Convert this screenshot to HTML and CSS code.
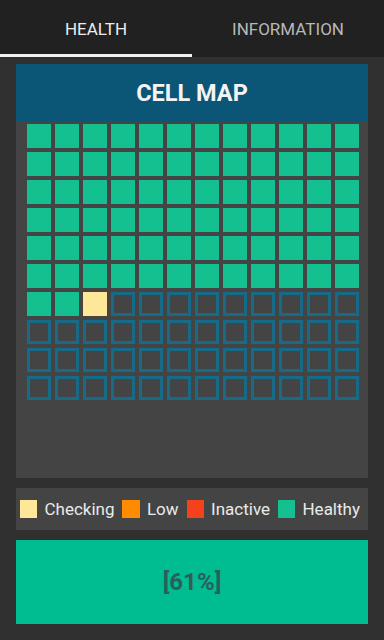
FILE: index.html
```html
<!DOCTYPE html>
<html lang="en">
<head>
    <meta charset="UTF-8">
    <meta name="viewport" content="width=device-width, initial-scale=1.0">
    <title>Cell Map</title>
    <link rel="stylesheet" href="styles.css">
</head>
<body>
<div class="tabs">
    <div class="tab active">HEALTH</div>
    <div class="tab">INFORMATION</div>
</div>

<div class="main">
    <div class="card">
        <div class="card-header">CELL MAP</div>
        <div class="cell-grid" id="cellGrid"></div>
    </div>

    <div class="legend">
        <span class="swatch checking"></span><span class="label">Checking</span>
        <span class="swatch low"></span><span class="label">Low</span>
        <span class="swatch inactive"></span><span class="label">Inactive</span>
        <span class="swatch healthy"></span><span class="label">Healthy</span>
    </div>

    <div class="percent">[61%]</div>
</div>

<script>
    // 74 healthy, 1 checking, the rest not reached yet
    const grid = document.getElementById('cellGrid');
    for (let i = 0; i < 120; i++) {
        const cell = document.createElement('div');
        cell.className = 'cell';
        if (i < 74) {
            cell.classList.add('healthy');
        } else if (i === 74) {
            cell.classList.add('checking');
        } else {
            cell.classList.add('empty');
        }
        grid.appendChild(cell);
    }
</script>
</body>
</html>
```

FILE: styles.css
```css
body {
    font-family: Roboto, "Noto Sans", sans-serif;
    margin: 0;
    background-color: #303030;
    color: #eee;
}
.tabs {
    display: flex;
    height: 57px;
    background-color: #212121;
}
.tab {
    flex: 1;
    display: flex;
    align-items: center;
    justify-content: center;
    font-size: 17px;
    color: #b8b8b8;
    border-bottom: 3px solid transparent;
    box-sizing: border-box;
    padding-top: 4px;
}
.tab.active {
    color: #ececec;
    border-bottom-color: #f2f2f2;
}
.main {
    padding: 7px 16px 0 16px;
}
.card {
    background-color: #444;
    height: 414px;
}
.card-header {
    height: 57px;
    background-color: #0b5677;
    color: #f4f4f4;
    font-size: 23.5px;
    font-weight: bold;
    display: flex;
    align-items: center;
    justify-content: center;
}
.cell-grid {
    display: grid;
    grid-template-columns: repeat(12, 24px);
    grid-auto-rows: 24px;
    gap: 4px;
    padding: 3px 0 0 11px;
}
.cell {
    box-sizing: border-box;
}
.cell.healthy {
    background-color: #14c08f;
}
.cell.checking {
    background-color: #ffe79a;
}
.cell.empty {
    border: 3px solid #176b88;
}
.legend {
    margin-top: 10px;
    height: 42px;
    background-color: #444;
    display: flex;
    align-items: center;
    padding-left: 4px;
    font-size: 17px;
    color: #eaeaea;
}
.swatch {
    width: 18px;
    height: 18px;
    margin-right: 7px;
}
.label {
    margin-right: 8px;
}
.swatch.checking {
    background-color: #ffe79a;
}
.swatch.low {
    background-color: #ff8c00;
}
.swatch.inactive {
    background-color: #f4421d;
}
.swatch.healthy {
    background-color: #14c08f;
}
.percent {
    margin-top: 10px;
    height: 84px;
    background-color: #00bc91;
    color: #2c5e5c;
    font-size: 24px;
    font-weight: bold;
    display: flex;
    align-items: center;
    justify-content: center;
}
```
